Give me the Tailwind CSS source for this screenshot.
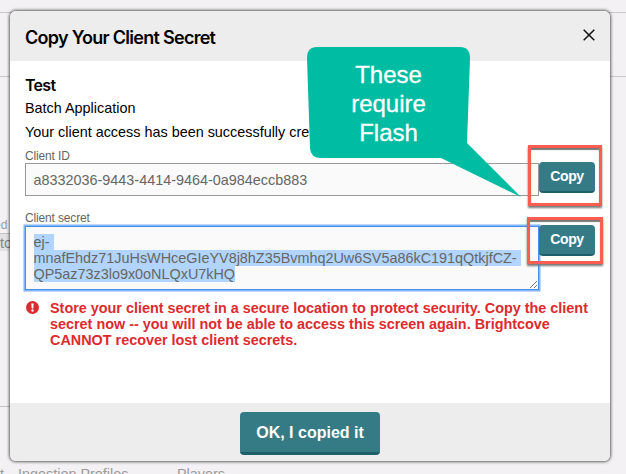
<!DOCTYPE html>
<html lang="en">
<head>
<meta charset="utf-8">
<title>Copy Your Client Secret</title>
<script src="https://cdn.jsdelivr.net/npm/@tailwindcss/browser@4"></script>
</head>
<body class="relative h-[474px] w-[626px] overflow-hidden bg-[#f3f1f3] font-['Liberation_Sans',Arial,sans-serif] text-black">
  <!-- Dimmed page behind the dialog -->
  <div class="flex h-[474px] flex-col whitespace-nowrap text-[14.4px] text-[#9c9b9c]">
    <div class="h-[13px] shrink-0 border-b border-[#c9c7c9]"></div>
    <div class="h-16 shrink-0 border-b border-[#c9c7c9]"></div>
    <div class="h-[330px] w-10 shrink-0 overflow-hidden border-b border-[#c3c1c3] pt-[140px]">
      <div class="-ml-[6px] h-[15px] text-[12px] leading-[17px]">ed</div>
      <div class="mt-px h-[18px] border-t border-[#c3c1c3] bg-[#e3e1e3] leading-[19px] text-[#858485]">to</div>
    </div>
    <div class="flex pt-[59px] leading-4">
      <span class="w-[18px]">t</span>
      <span class="w-[159px]">Ingestion Profiles</span>
      <span>Players</span>
    </div>
  </div>

  <!-- Dialog -->
  <div class="absolute left-[10px] top-[11px] flex h-[450px] w-[600px] flex-col overflow-hidden rounded-[6px] bg-white shadow-[0_0_3px_1px_rgba(0,0,0,0.6)]">
    <header class="flex h-[50px] shrink-0 items-center justify-between bg-[#ededed] pl-[15px] pr-[16px]">
      <h1 class="mt-[2px] font-['Inter',sans-serif] text-[18px] font-semibold tracking-[-0.72px] whitespace-nowrap">Copy Your Client Secret</h1>
      <svg class="-mt-[3px] -mr-[1px] h-3 w-3" viewBox="0 0 12 12" fill="none" stroke="#111" stroke-width="1.5"><path d="M.7.7l10.600 10.600M11.300.7L.7 11.300"/></svg>
    </header>
    <main class="h-[342px] shrink-0 pl-[15px] pt-3">
      <h2 class="h-6 font-['Inter',sans-serif] text-[16px] font-semibold leading-6 tracking-[-0.7px]">Test</h2>
      <p class="h-6 text-[14.4px] leading-[22px]">Batch Application</p>
      <p class="h-6 text-[14.4px] leading-[22px] whitespace-nowrap">Your client access has been successfully created.</p>
      <label class="mt-[5px] block h-[13px] text-[12px] leading-[13px] tracking-[-0.15px] text-[#666]">Client ID</label>
      <div class="flex h-[33px] items-start">
        <div class="h-[33px] w-[514px] shrink-0 border border-[#999] bg-[#fafafa] pl-[7.5px] text-[14.4px] leading-[32px] text-[#666]">a8332036-9443-4414-9464-0a984eccb883</div>
        <button class="-mt-px h-[31px] w-[56px] shrink-0 rounded-[4px] border-b-2 border-[#1d6069] bg-[#347b86] text-[14px] tracking-[-0.4px] font-bold leading-[29px] text-white">Copy</button>
      </div>
      <label class="mt-4 block h-[13px] text-[12px] leading-[13px] tracking-[-0.15px] text-[#666]">Client secret</label>
      <div class="mt-px flex h-16 items-start">
        <div class="relative h-16 w-[514px] shrink-0 border border-[#4c8ee8] bg-[#fafafa] pl-[7.5px] pt-[7px] text-[14.4px] leading-4 text-[#666] shadow-[0_0_0_1.5px_#80b4fc]">
          <div class="flex flex-col items-start whitespace-nowrap">
            <span class="h-4 bg-[#b1d5ff] pr-1">ej-</span>
            <span class="h-4 bg-[#b1d5ff] pr-1">mnafEhdz71JuHsWHceGIeYV8j8hZ35Bvmhq2Uw6SV5a86kC191qQtkjfCZ-</span>
            <span class="h-4 bg-[#b1d5ff]">QP5az73z3lo9x0oNLQxU7kHQ</span>
          </div>
          <svg class="absolute bottom-px right-px h-[7px] w-[7px]" viewBox="0 0 7 7" stroke="#777" stroke-width="1"><path d="M0 7L7 0M4 7L7 4"/></svg>
        </div>
        <button class="relative -mt-px h-[31px] w-[56px] shrink-0 rounded-[4px] border-b-2 border-[#1d6069] bg-[#347b86] text-[14px] tracking-[-0.4px] font-bold leading-[29px] text-white">Copy</button>
      </div>
      <div class="mt-[10px] flex">
        <svg class="mt-[1px] ml-[1px] h-[13px] w-[13px] shrink-0" viewBox="0 0 13 13"><circle cx="6.500" cy="6.500" r="6.500" fill="#dc2b2f"/><path d="M5.300 2.500h2.400l-.4 5h-1.600z" fill="#fff"/><circle cx="6.500" cy="9.500" r="1.200" fill="#fff"/></svg>
        <p class="ml-[11px] text-[14.4px] font-bold leading-4 whitespace-nowrap text-[#dc2b2f]">Store your client secret in a secure location to protect security. Copy the client<br>secret now -- you will not be able to access this screen again. Brightcove<br>CANNOT recover lost client secrets.</p>
      </div>
    </main>
    <footer class="flex h-[58px] shrink-0 justify-center bg-[#ededed] pt-[9px]">
      <button class="h-[43px] w-[140px] rounded-[4px] border-b-[3px] border-[#1d6069] bg-[#347b86] text-[16px] font-bold leading-[42px] text-white">OK, I copied it</button>
    </footer>
  </div>

  <!-- Annotations over the dialog -->
  <svg class="absolute left-0 top-0 h-[474px] w-[626px]" viewBox="0 0 626 474">
    <path d="M317 47H460Q470 47 470 58L467 143L521 197L441 158H321Q310.500 158 310 148L307 58Q307 47 317 47Z" fill="#00bca2"/>
  </svg>
  <div class="absolute left-[308px] top-[60px] w-[161px] text-center text-[24px] leading-[29px] text-white [-webkit-text-stroke:0.3px_white]">These<br>require<br>Flash</div>
  <div class="absolute left-[528px] top-[145px] h-[61px] w-[74px] border-[3px] border-[#fb5d50] shadow-[0_2px_2px_#777,inset_0_2px_1px_#777]"></div>
  <div class="absolute left-[527px] top-[217px] h-[47px] w-[76px] border-[3px] border-[#fb5d50] shadow-[0_2px_2px_#777,inset_0_2px_1px_#777]"></div>
</body>
</html>
